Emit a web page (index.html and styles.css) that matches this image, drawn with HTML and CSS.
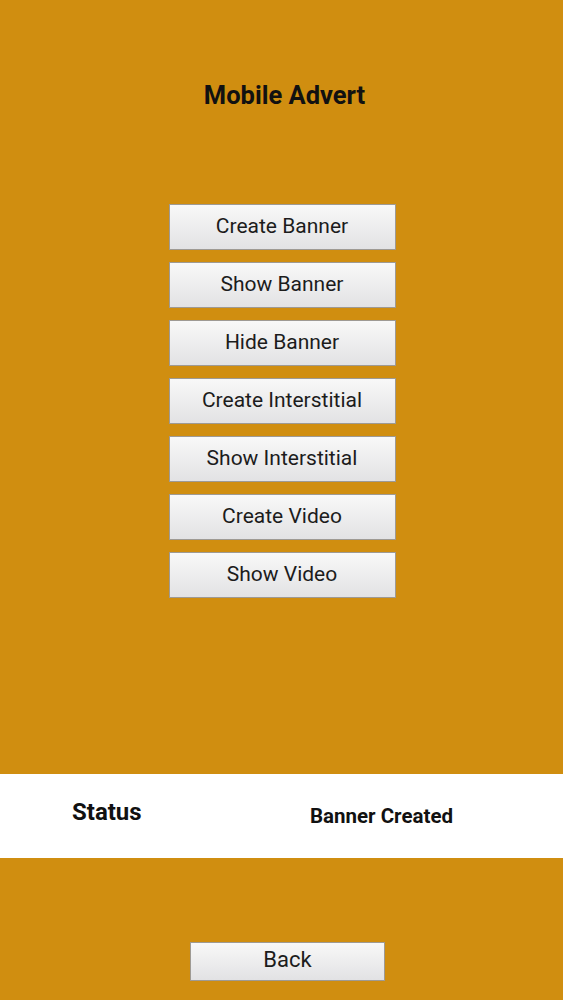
FILE: index.html
```html
<!DOCTYPE html>
<html>
<head>
<meta charset="utf-8">
<link rel="stylesheet" href="styles.css">
</head>
<body>
<div class="page">
  <h1 class="title">Mobile Advert</h1>
  <div class="menu">
    <button class="btn">Create Banner</button>
    <button class="btn">Show Banner</button>
    <button class="btn">Hide Banner</button>
    <button class="btn">Create Interstitial</button>
    <button class="btn">Show Interstitial</button>
    <button class="btn">Create Video</button>
    <button class="btn">Show Video</button>
  </div>
  <div class="status">
    <span class="status-label">Status</span>
    <span class="status-value">Banner Created</span>
  </div>
  <div class="footer">
    <button class="btn back">Back</button>
  </div>
</div>
</body>
</html>
```

FILE: styles.css
```css
html, body {
  margin: 0;
  padding: 0;
  background: #d08e10;
  font-family: Roboto, "Liberation Sans", sans-serif;
}
.page {
  display: flex;
  flex-direction: column;
  height: 1000px;
}
.title {
  margin: 0;
  padding-top: 80px;
  height: 30px;
  line-height: 30px;
  font-size: 25.5px;
  font-weight: 700;
  text-align: center;
  color: #111;
  padding-left: 6px;
}
.menu {
  display: flex;
  flex-direction: column;
  align-items: center;
  gap: 12px;
  margin-top: 94px;
  padding-left: 1px;
}
.btn {
  width: 227px;
  height: 46px;
  box-sizing: border-box;
  border: 1.5px solid #9e9a94;
  background: linear-gradient(#f8f8f8, #e2e2e4);
  font-family: Roboto, "Liberation Sans", sans-serif;
  font-size: 21px;
  color: #1c1c1c;
  padding: 0 0 3px 0;
  margin: 0;
}
.status {
  margin-top: 176px;
  height: 84px;
  background: #fff;
  display: flex;
  align-items: center;
  font-weight: 700;
  color: #111;
}
.status-label {
  font-size: 24px;
  margin-left: 72px;
  margin-top: -8px;
  width: 238px;
}
.status-value {
  font-size: 20.5px;
}
.footer {
  display: flex;
  justify-content: center;
  margin-top: 84px;
  padding-left: 12px;
}
.back {
  width: 195px;
  height: 39px;
  font-size: 22px;
  padding-bottom: 4px;
}
```
